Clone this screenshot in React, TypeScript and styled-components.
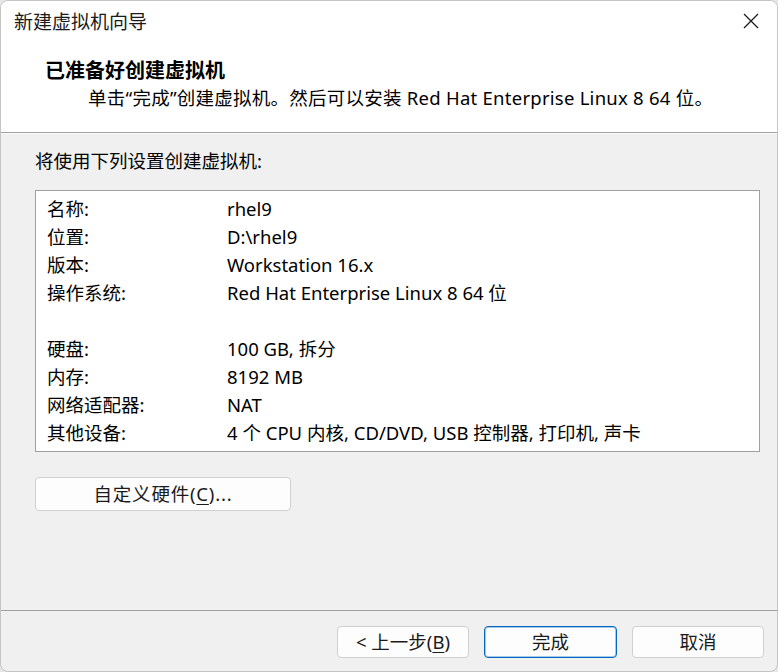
import styled, { createGlobalStyle } from "styled-components";

const GlobalStyle = createGlobalStyle`
  html, body {
    margin: 0;
    padding: 0;
    background: #e6e6e6;
  }
  * {
    box-sizing: border-box;
  }
`;

interface ISetting {
  label: string;
  value: string;
}

// null = the empty spacer row between the two groups
const settings: (ISetting | null)[] = [
  { label: "名称:", value: "rhel9" },
  { label: "位置:", value: "D:\\rhel9" },
  { label: "版本:", value: "Workstation 16.x" },
  { label: "操作系统:", value: "Red Hat Enterprise Linux 8 64 位" },
  null,
  { label: "硬盘:", value: "100 GB, 拆分" },
  { label: "内存:", value: "8192 MB" },
  { label: "网络适配器:", value: "NAT" },
  { label: "其他设备:", value: "4 个 CPU 内核, CD/DVD, USB 控制器, 打印机, 声卡" },
];

const CloseIcon = () => (
  <svg width="16" height="16" viewBox="0 0 16 16">
    <path d="M1 1 L15 15 M15 1 L1 15" stroke="#1c1c1c" strokeWidth="1.3" fill="none" />
  </svg>
);

export default function App() {
  return (
    <>
      <GlobalStyle />
      <Window>
        <Header>
          <TitleBar>
            <Title>新建虚拟机向导</Title>
            <CloseButton>
              <CloseIcon />
            </CloseButton>
          </TitleBar>
          <Heading>
            <HeadingTitle>已准备好创建虚拟机</HeadingTitle>
            <HeadingText>
              单击“完成”创建虚拟机。然后可以安装 Red Hat Enterprise Linux 8 64 位。
            </HeadingText>
          </Heading>
        </Header>

        <Body>
          <Intro>将使用下列设置创建虚拟机:</Intro>
          <SettingsBox>
            {settings.map((s, i) =>
              s ? (
                <Row key={i}>
                  <Label>{s.label}</Label>
                  <Value>{s.value}</Value>
                </Row>
              ) : (
                <Row key={i} />
              )
            )}
          </SettingsBox>
          <Button $width={256} $spaced>
            自定义硬件(<u>C</u>)...
          </Button>
        </Body>

        <Footer>
          <Button $width={132}>
            &lt; 上一步(<u>B</u>)
          </Button>
          <Button $width={133} $primary>
            完成
          </Button>
          <Button $width={132}>取消</Button>
        </Footer>
      </Window>
    </>
  );
}

const Window = styled.div`
  display: flex;
  flex-direction: column;
  width: 778px;
  height: 672px;
  border: 1px solid #c4c4c4;
  border-radius: 8px;
  overflow: hidden;
  background: #f0f0f0;
  font-family: "Noto Sans", "Noto Sans CJK SC", sans-serif;
  font-size: 18.5px;
  color: #000;
`;

const Header = styled.div`
  height: 132px;
  background: #fff;
  border-bottom: 1px solid #a0a0a0;
  box-shadow: 0 1px 0 #fbfbfb;
`;

const TitleBar = styled.div`
  display: flex;
  align-items: center;
  justify-content: space-between;
  height: 40px;
  padding: 0 16px 0 13px;
`;

const Title = styled.span`
  font-size: 19px;
  color: #1a1a1a;
`;

const CloseButton = styled.div`
  display: flex;
  align-items: center;
  justify-content: center;
  width: 20px;
  height: 20px;
`;

const Heading = styled.div`
  display: flex;
  flex-direction: column;
  padding: 15px 0 0 44px;
`;

const HeadingTitle = styled.span`
  font-family: "Noto Sans CJK SC", sans-serif;
  font-size: 20px;
  font-weight: 700;
  line-height: 28px;
`;

const HeadingText = styled.span`
  padding-left: 43px;
  line-height: 28px;
  letter-spacing: 0.25px;
  white-space: nowrap;
`;

const Body = styled.div`
  display: flex;
  flex: 1;
  flex-direction: column;
  align-items: flex-start;
  gap: 15px;
  padding: 14px 17px 0 34px;
`;

const Intro = styled.div`
  line-height: 28px;
`;

const SettingsBox = styled.div`
  width: 100%;
  height: 262px;
  padding: 4px 0 0 11px;
  background: #fff;
  border: 1px solid #a0a0a0;
  margin-bottom: 10px;
`;

const Row = styled.div`
  display: grid;
  grid-template-columns: 180px 1fr;
  height: 28px;
  line-height: 28px;
  white-space: nowrap;
`;

const Label = styled.span``;

const Value = styled.span``;

const Button = styled.div<{ $width: number; $primary?: boolean; $spaced?: boolean }>`
  display: flex;
  align-items: center;
  justify-content: center;
  width: ${(p) => p.$width}px;
  height: ${(p) => (p.$width > 200 ? 34 : 32)}px;
  background: #fdfdfd;
  border: 1px solid ${(p) => (p.$primary ? "#0067c0" : "#d0d0d0")};
  box-shadow: ${(p) => (p.$primary ? "inset 0 0 0 1px rgba(0, 103, 192, 0.35)" : "none")};
  border-radius: 4px;
  line-height: 1;
  color: #1a1a1a;
  letter-spacing: ${(p) => (p.$spaced ? "0.8px" : "0")};

  u {
    text-underline-offset: 3px;
  }
`;

const Footer = styled.div`
  display: flex;
  justify-content: flex-end;
  gap: 15px;
  padding: 15px 13px 13px 0;
  border-top: 1px solid #a0a0a0;
`;
